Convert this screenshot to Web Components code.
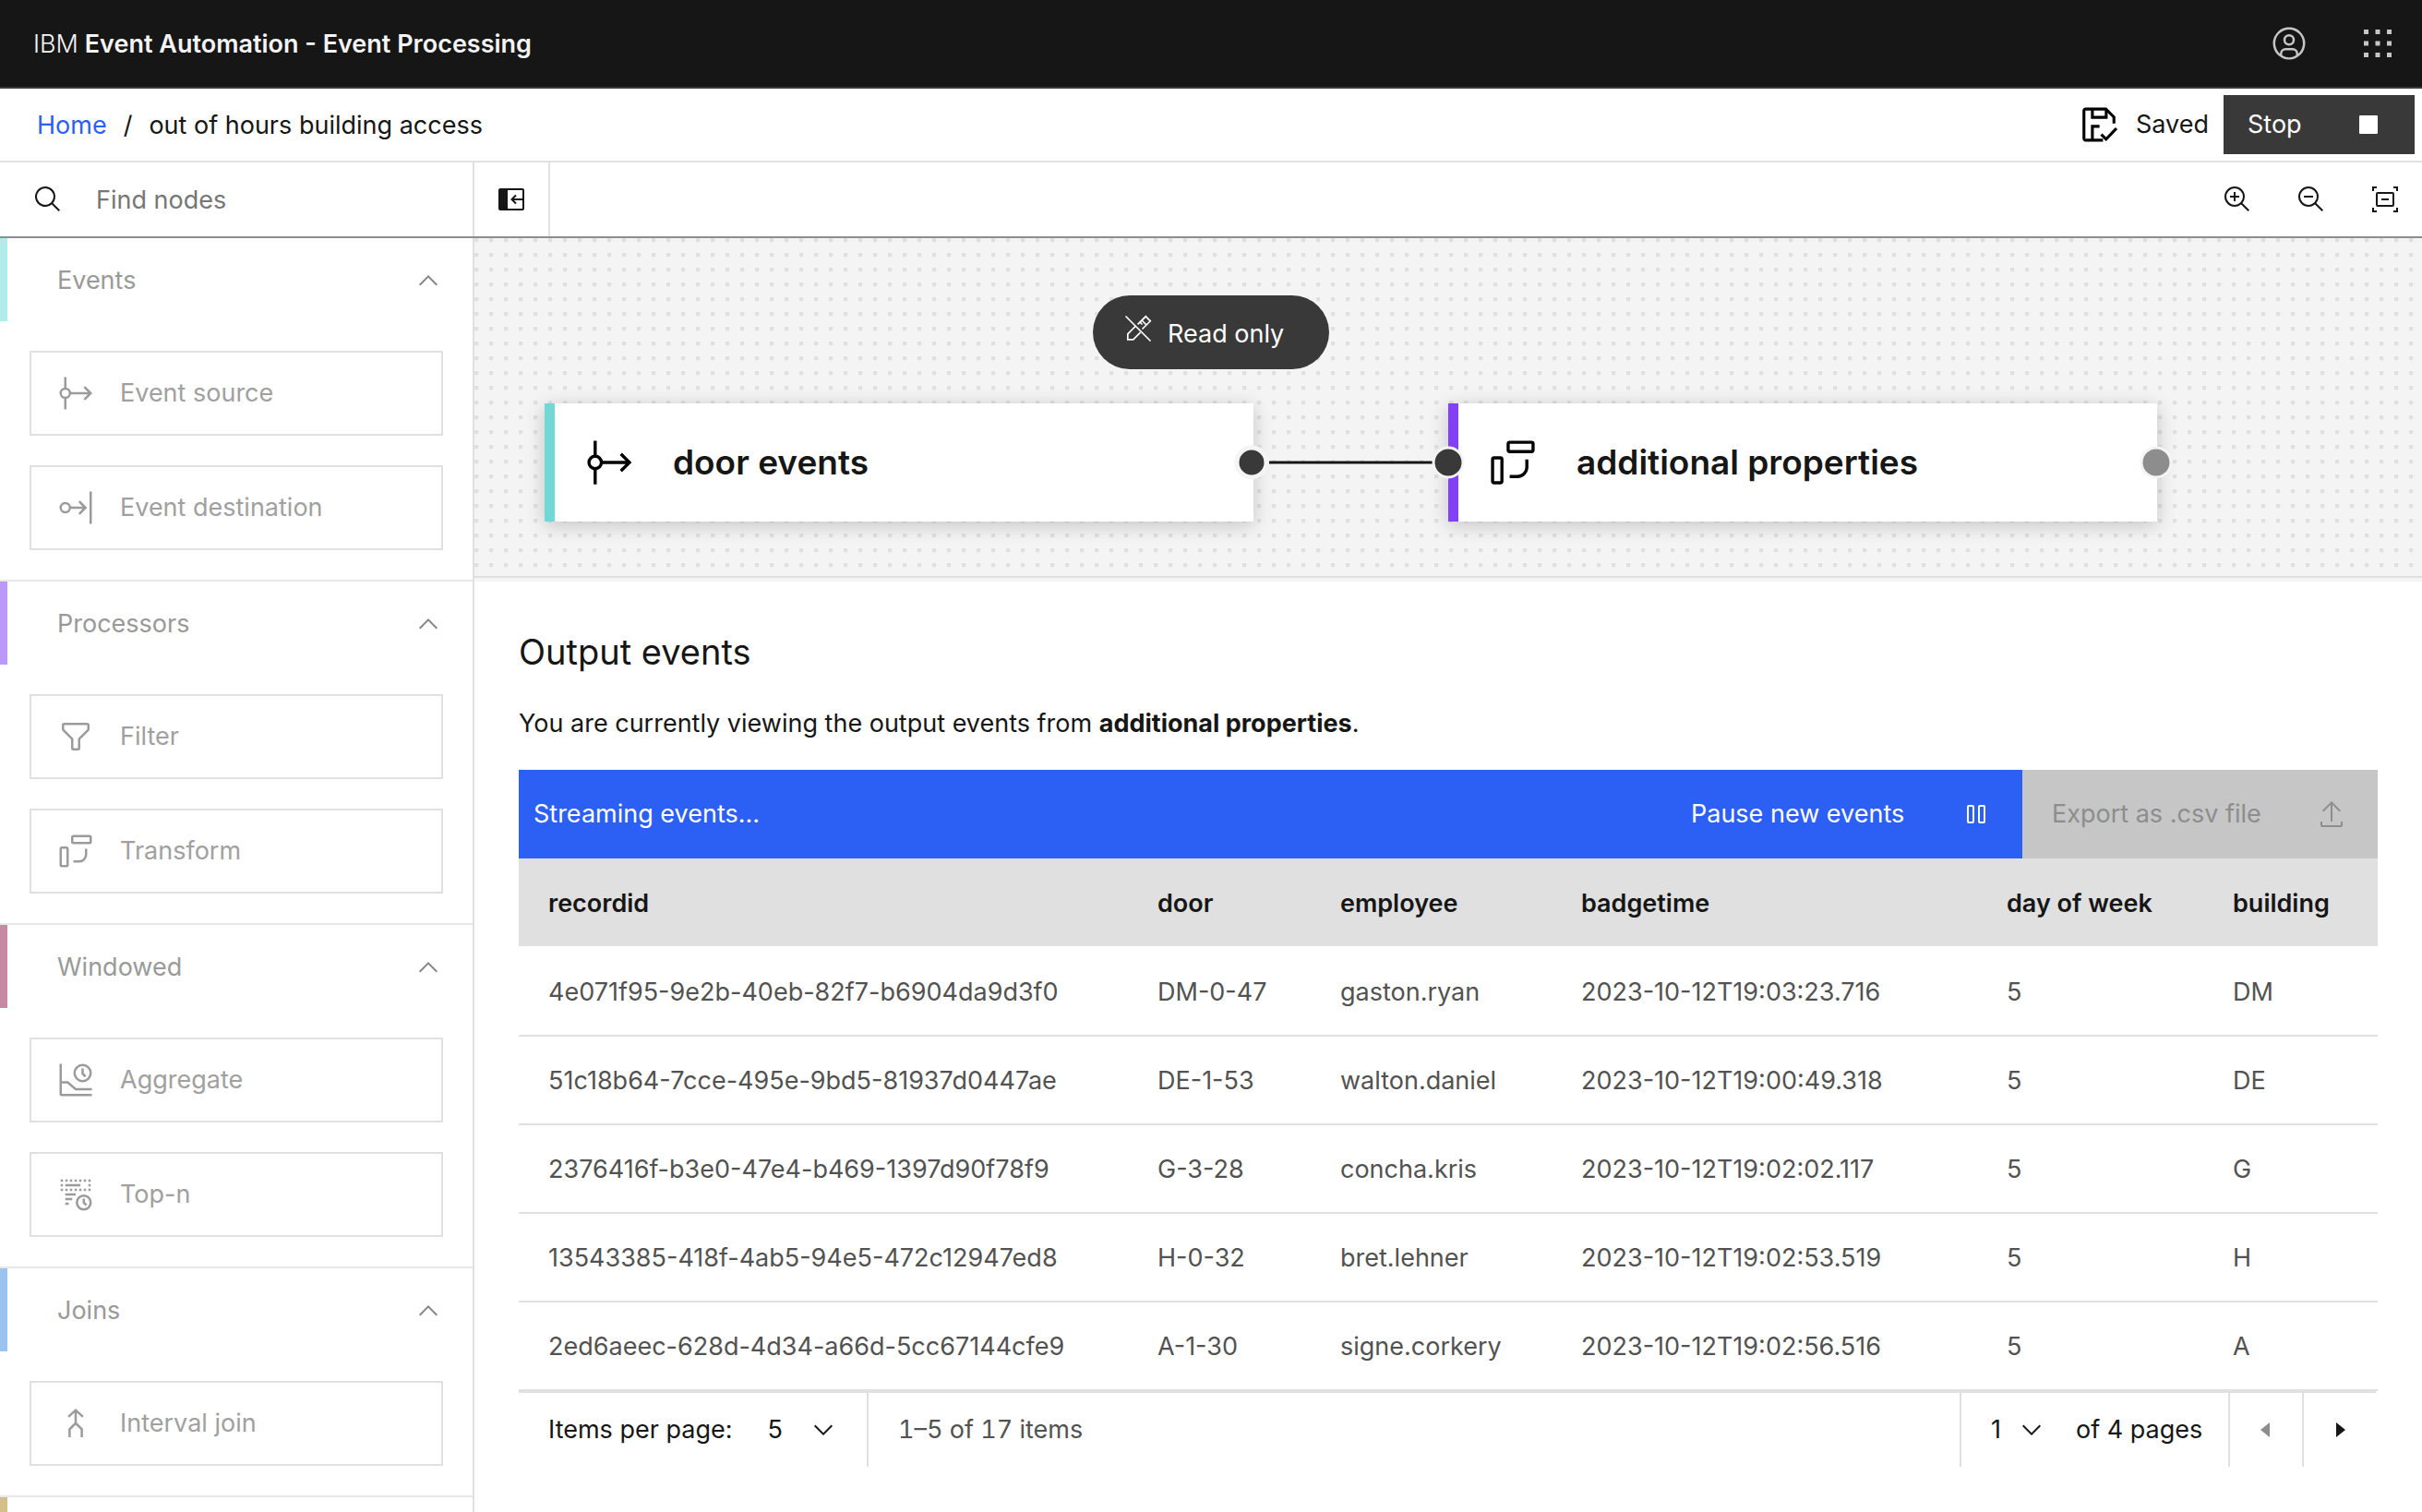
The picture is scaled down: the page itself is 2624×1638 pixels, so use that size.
<!DOCTYPE html>
<html lang="en">
<head>
<meta charset="utf-8">
<title>Event Processing</title>
<style>
html,body{margin:0;height:100%}
body{
  --ink:#161616;--muted:#525252;--line:#e0e0e0;--off:#9b9b9b;--blue:#2c60f5;--dark:#393939;
  font-family:Inter,"Open Sans",sans-serif;font-size:27px;line-height:36px;color:var(--ink);background:#fff;overflow:hidden}
</style>
</head>
<body>
<ep-app></ep-app>
<script>
const define=(name,css,html,init)=>{
  const tpl=document.createElement('template');
  tpl.innerHTML=`<style>*{box-sizing:border-box}
  button,input,select{font:inherit;color:inherit;background:none;border:0;margin:0;padding:0;border-radius:0;appearance:none;outline:0}
  ${css}</style>${html}`;
  customElements.define(name,class extends HTMLElement{
    constructor(){
      super();
      this.attachShadow({mode:'open'}).append(tpl.content.cloneNode(true));
    }
    connectedCallback(){
      if(init&&!this.ready){this.ready=true;init.call(this,this.shadowRoot);}
    }
  });
};

const S='fill="none" stroke="currentColor" stroke-width="2"';
const squares=pts=>pts.map(([x,y])=>`<rect x="${x-1}" y="${y-1}" width="2" height="2"/>`).join('');
const ICONS={
  search:'<path d="M29,27.586l-7.552-7.552a11.018,11.018,0,1,0-1.414,1.414L27.586,29ZM4,13a9,9,0,1,1,9,9A9.01,9.01,0,0,1,4,13Z"/>',
  zoomIn:'<path d="M18 12h-4V8h-2v4H8v2h4v4h2v-4h4z"/><path d="M21.448,20A10.856,10.856,0,0,0,24,13,11,11,0,1,0,13,24a10.856,10.856,0,0,0,7-2.552L27.586,29,29,27.586ZM13,22a9,9,0,1,1,9-9A9.01,9.01,0,0,1,13,22Z"/>',
  zoomOut:'<path d="M8 12h10v2H8z"/><path d="M21.448,20A10.856,10.856,0,0,0,24,13,11,11,0,1,0,13,24a10.856,10.856,0,0,0,7-2.552L27.586,29,29,27.586ZM13,22a9,9,0,1,1,9-9A9.01,9.01,0,0,1,13,22Z"/>',
  fit:`<g ${S}><path d="M3 7V3h4M25 3h4v4M29 25v4h-4M7 29H3v-4"/><rect x="7" y="9" width="18" height="14" rx="1"/><path d="M12 16h8"/></g>`,
  panel:`<rect x="3" y="5" width="26" height="22" rx="1" ${S}/><path d="M3 5h9v22H3z"/><path d="M29 16H17M21 11.500l-4.500 4.500 4.500 4.500" ${S}/>`,
  user:'<path d="M16,8a5,5,0,1,0,5,5A5,5,0,0,0,16,8Zm0,8a3,3,0,1,1,3-3A3,3,0,0,1,16,16Z"/><path d="M16,2A14,14,0,1,0,30,16,14.016,14.016,0,0,0,16,2ZM10,26.377V25a3,3,0,0,1,3-3h6a3,3,0,0,1,3,3v1.377a11.899,11.899,0,0,1-12,0Zm13.993-1.451A5.002,5.002,0,0,0,19,20H13a5.002,5.002,0,0,0-4.993,4.926,12,12,0,1,1,15.985,0Z"/>',
  apps:[4,14,24].map(y=>[4,14,24].map(x=>`<rect x="${x}" y="${y}" width="4" height="4"/>`).join('')).join(''),
  saved:'<g fill="none" stroke="currentColor" stroke-width="2.500"><path d="M19.500 29.500H4.500a1.500 1.500 0 0 1-1.500-1.500V4a1.500 1.500 0 0 1 1.500-1.500H22l7 7V15"/><path d="M10.300 3v6.700h12V3M10.300 29V17.500h6.200"/><path d="M18 24.500l4.200 4.200 9-9.500"/></g>',
  stop:'<rect x="6" y="6" width="20" height="20" rx="1"/>',
  up:'<path d="M16 10 26 20 24.600 21.400 16 12.800 7.400 21.400 6 20z"/>',
  down:'<path d="M16 22 6 12 7.400 10.600 16 19.200 24.600 10.600 26 12z"/>',
  left:'<path d="M20 24 10 16 20 8z"/>',
  right:'<path d="M12 8 22 16 12 24z"/>',
  source:`<g ${S}><circle cx="7" cy="16" r="4"/><path d="M7 2v10M7 20v10M11 16h18M23.500 10.500 29 16l-5.500 5.500"/></g>`,
  destination:`<g ${S}><circle cx="7" cy="16" r="4"/><path d="M11 16h13M19 10.500l5.500 5.500-5.500 5.500M29 2v28"/></g>`,
  filter:'<path d="M18,28H14a2,2,0,0,1-2-2V18.410L4.590,11A2,2,0,0,1,4,9.590V6A2,2,0,0,1,6,4H26a2,2,0,0,1,2,2V9.590A2,2,0,0,1,27.410,11L20,18.410V26A2,2,0,0,1,18,28ZM6,6V9.590l8,8V26h4V17.590l8-8V6Z"/>',
  transform:`<g ${S}><rect x="13" y="3" width="16" height="6" rx="1"/><rect x="3" y="13" width="6" height="16" rx="1"/><path d="M25 14v5a6 6 0 0 1-6 6h-5"/></g>`,
  aggregate:`<g ${S}><path d="M3 2v26a1 1 0 0 0 1 1h26M3 18h6l7 6h14"/><circle cx="22" cy="10" r="7"/><path d="M22 6v4.500l2.500 2.500"/></g>`,
  topn:squares([4,8,12,16,20,24,28].flatMap(x=>[[x,4],[x,12]]).concat([[4,8],[28,8]]))+
    `<path d="M7 8h13M7 16h9M7 20h6M7 24h3" ${S}/><g ${S}><circle cx="23" cy="23" r="6"/><path d="M23 19.500v3.500l2.300 2.300"/></g>`,
  join:`<g ${S}><path d="M9.700 10.300 16 4.500l6.300 5.800M16 5v11M10.700 28v-7L16 15.800 21.300 21v7"/></g>`,
  editOff:'<g fill="none" stroke="currentColor" stroke-width="1.700"><path d="M2.500 2.500l27 27M13 13.500 4.800 21.800v6h6l7.700-7.700M15.600 11.300 24.300 2.800l5 5-8.800 8.700M20 7l5 5M16 11l2-2 2.500 2.500"/></g>',
  pause:`<g ${S}><rect x="7" y="7" width="6" height="18" rx="1"/><rect x="19" y="7" width="6" height="18" rx="1"/></g>`,
  upload:'<path d="M6 12 7.411 13.405 15 5.825V24h2V5.825l7.591 7.580L26 12 16 2z"/><path d="M26,24v4H6V24H4v4a2,2,0,0,0,2,2H26a2,2,0,0,0,2-2V24Z"/>'
};
define('ep-icon',':host{display:block;flex:none;width:var(--size,32px);height:var(--size,32px)}svg{display:block;width:100%;height:100%;fill:currentColor;overflow:visible}','',function(r){
  r.innerHTML+=`<svg viewBox="0 0 32 32" aria-hidden="true">${ICONS[this.getAttribute('name')]}</svg>`;
});

define('ep-header',`:host{display:flex;align-items:center;height:96px;background:#161616;border-bottom:2px solid #393939;color:#f4f4f4;padding-left:36px}
h1{flex:1;margin:0;padding-top:2px;font-size:inherit;font-weight:600}span{font-weight:300}
button{width:96px;height:94px;display:grid;place-items:center;color:#c6c6c6;--size:40px}`,
`<h1><span>IBM</span> Event Automation - Event Processing</h1>
<button aria-label="User"><ep-icon name="user"></ep-icon></button>
<button aria-label="Applications"><ep-icon name="apps"></ep-icon></button>`);

define('ep-breadcrumb',`:host{display:flex;align-items:center;height:80px;border-bottom:2px solid var(--line);padding:0 8px 0 40px}
nav{flex:1;display:flex;gap:18px;padding-top:2px}a{color:var(--blue);text-decoration:none}
.saved{display:flex;align-items:center;gap:20px;margin-right:16px}.saved ep-icon{--size:40px;color:#000}
.stop{width:207px;height:64px;padding:0 34px 0 26px;display:flex;align-items:center;justify-content:space-between;background:var(--dark);color:#fff}`,
`<nav aria-label="Breadcrumb"><a href="#">Home</a><span>/</span><span>out of hours building access</span></nav>
<div class="saved"><ep-icon name="saved"></ep-icon><span>Saved</span></div>
<button class="stop">Stop<ep-icon name="stop"></ep-icon></button>`);

define('ep-toolbar',`:host{display:flex;height:82px;border-bottom:2px solid #8d8d8d}
label{width:514px;display:flex;align-items:center;gap:36px;padding-left:36px;border-right:2px solid var(--line)}
input{flex:1;min-width:0;padding-top:2px}input::placeholder{color:#767676;opacity:1}
button{width:80px;display:grid;place-items:center}
.panel{width:82px;border-right:2px solid var(--line);margin-right:auto}`,
`<label><ep-icon name="search"></ep-icon><input type="search" placeholder="Find nodes" aria-label="Find nodes"></label>
<button class="panel" aria-label="Collapse panel"><ep-icon name="panel"></ep-icon></button>
<button aria-label="Zoom in"><ep-icon name="zoomIn"></ep-icon></button>
<button aria-label="Zoom out"><ep-icon name="zoomOut"></ep-icon></button>
<button aria-label="Zoom to fit"><ep-icon name="fit"></ep-icon></button>`);

define('ep-section',`:host{display:flex;flex-direction:column;gap:32px;padding-bottom:32px;border-bottom:2px solid #e8e8e8;flex:none}
button{height:90px;display:flex;align-items:center;justify-content:space-between;border-left:8px solid var(--bar);padding:2px 32px 0 54px;color:#999}
ep-icon{color:#858585}
.items{display:flex;flex-direction:column;gap:32px;padding:0 32px}`,
`<button disabled><slot name="title"></slot><ep-icon name="up"></ep-icon></button><div class="items"><slot></slot></div>`);

define('ep-item',`:host{display:block}
button{width:100%;height:92px;display:flex;align-items:center;gap:28px;padding-left:28px;border:2px solid var(--line);color:#a0a0a0}
ep-icon{--size:40px;color:var(--off)}`,
`<button disabled><slot></slot></button>`,function(r){
  const i=document.createElement('ep-icon');i.setAttribute('name',this.getAttribute('icon'));r.querySelector('button').prepend(i);
});

define('ep-palette',`:host{display:flex;flex-direction:column;width:514px;flex:none;border-right:2px solid var(--line);overflow:hidden}`,
`<ep-section style="--bar:#b2ecea"><span slot="title">Events</span><ep-item icon="source">Event source</ep-item><ep-item icon="destination">Event destination</ep-item></ep-section>
<ep-section style="--bar:#bb99f8"><span slot="title">Processors</span><ep-item icon="filter">Filter</ep-item><ep-item icon="transform">Transform</ep-item></ep-section>
<ep-section style="--bar:#c68ba4"><span slot="title">Windowed</span><ep-item icon="aggregate">Aggregate</ep-item><ep-item icon="topn">Top-n</ep-item></ep-section>
<ep-section style="--bar:#9ac3f0"><span slot="title">Joins</span><ep-item icon="join">Interval join</ep-item></ep-section>
<ep-section style="--bar:#d4be8a"></ep-section>`);

define('ep-node',`:host{position:absolute;display:flex;align-items:center;width:768px;height:128px;background:#fff;border-left:11px solid var(--bar);
  box-sizing:border-box;box-shadow:0 4px 20px rgba(0,0,0,.2);padding-left:32px;gap:42px;font-size:37px;font-weight:600}
ep-icon{--size:54px;color:#000}`,`<slot></slot>`,function(r){
  const i=document.createElement('ep-icon');i.setAttribute('name',this.getAttribute('icon'));r.querySelector('slot').before(i);
});

define('ep-canvas',`:host{display:block;position:relative;height:372px;flex:none;background:#f4f4f4;overflow:hidden}
.dots{height:368px;border-bottom:2px solid var(--line);background:radial-gradient(circle at 2px 2px,#e0e0e0 2px,transparent 3px) 0 0/16px 16px}
svg{position:absolute;inset:0;width:100%;height:100%}
.a{left:76px;top:179px}.b{left:1055px;top:179px}`,
`<div class="dots"></div>
<ep-node class="a" icon="source" style="--bar:#71d8d6">door events</ep-node>
<ep-node class="b" icon="transform" style="--bar:#8341f5">additional properties</ep-node>
<svg aria-hidden="true"><path d="M861 243h178" stroke="#161616" stroke-width="3"/>
<g stroke="#f4f4f4"><circle cx="842" cy="243" r="16" fill="#393939" stroke-width="5"/>
<circle cx="1055" cy="243" r="16" fill="#393939" stroke-width="3"/><circle cx="1822" cy="243" r="16" fill="#8d8d8d" stroke-width="3"/></g></svg>`);

define('ep-toast',`:host{position:absolute;left:50%;top:320px;transform:translateX(-50%);width:256px;height:80px;border-radius:40px;background:var(--dark);color:#fff;
 box-sizing:border-box;display:flex;align-items:center;gap:16px;padding:4px 0 0 33px}ep-icon{padding-bottom:12px;box-sizing:content-box}`,
`<ep-icon name="editOff"></ep-icon><slot></slot>`);

define('ep-table',`:host{display:block}
table{width:100%;table-layout:fixed;border-collapse:separate;border-spacing:0}
th,td{text-align:left;padding:2px 0 0 32px;height:96px;border-bottom:2px solid var(--line);white-space:nowrap}
th{font-weight:600;height:97px;background:var(--line) padding-box;border-color:#fff}
td{color:var(--muted)}`,
`<table><colgroup><col style="width:660px"><col style="width:198px"><col style="width:261px"><col style="width:461px"><col style="width:245px"><col style="width:189px"></colgroup>
<thead><tr></tr></thead><tbody></tbody></table>`,function(r){
  const cols=['recordid','door','employee','badgetime','day of week','building'];
  const rows=[
    ['4e071f95-9e2b-40eb-82f7-b6904da9d3f0','DM-0-47','gaston.ryan','2023-10-12T19:03:23.716','5','DM'],
    ['51c18b64-7cce-495e-9bd5-81937d0447ae','DE-1-53','walton.daniel','2023-10-12T19:00:49.318','5','DE'],
    ['2376416f-b3e0-47e4-b469-1397d90f78f9','G-3-28','concha.kris','2023-10-12T19:02:02.117','5','G'],
    ['13543385-418f-4ab5-94e5-472c12947ed8','H-0-32','bret.lehner','2023-10-12T19:02:53.519','5','H'],
    ['2ed6aeec-628d-4d34-a66d-5cc67144cfe9','A-1-30','signe.corkery','2023-10-12T19:02:56.516','5','A']];
  r.querySelector('thead tr').innerHTML=cols.map(c=>`<th scope="col">${c}</th>`).join('');
  r.querySelector('tbody').innerHTML=rows.map(w=>`<tr>${w.map(c=>`<td>${c}</td>`).join('')}</tr>`).join('');
});

define('ep-pagination',`:host{display:flex;height:82px;border-top:2px solid var(--line);margin-right:2px;box-sizing:border-box;white-space:nowrap}
div,button{display:flex;align-items:center}
.size{padding-left:32px;gap:38px;width:379px;border-right:2px solid var(--line)}
.range{flex:1;padding-left:32px;color:var(--muted);font-variant-numeric:tabular-nums}
.pick{display:grid;align-items:center}.pick>*{grid-area:1/1}.pick ep-icon{justify-self:end;pointer-events:none}
.size select{width:76px}.page select{width:60px}
.page{width:291px;border-left:2px solid var(--line);padding-left:32px;gap:32px}
button{width:80px;justify-content:center;border-left:2px solid var(--line)}button:disabled{color:#8d8d8d}`,
`<div class="size"><label for="size">Items per page:</label><span class="pick"><select id="size"><option>5</option></select><ep-icon name="down"></ep-icon></span></div>
<div class="range">1–5 of 17 items</div>
<div class="page"><span class="pick"><select id="page" aria-label="Page"><option>1</option></select><ep-icon name="down"></ep-icon></span><label for="page">of 4 pages</label></div>
<button disabled aria-label="Previous page"><ep-icon name="left"></ep-icon></button>
<button aria-label="Next page"><ep-icon name="right"></ep-icon></button>`);

define('ep-output',`:host{display:block;padding:48px 48px 0}
h2{margin:0;font-size:38px;line-height:56px;font-weight:400}p{margin:32px 0}b{font-weight:700}
.bar{display:flex;align-items:center;height:96px;background:var(--blue);color:#fff}
.bar span{flex:1;padding-left:16px}
.bar button{height:96px;display:flex;align-items:center;justify-content:space-between;padding:0 34px 0 32px}
.pause{width:391px}.export{width:385px}.export:disabled{background:#c6c6c6;color:#8d8d8d}`,
`<h2>Output events</h2>
<p>You are currently viewing the output events from <b>additional properties</b>.</p>
<div class="bar"><span>Streaming events...</span>
<button class="pause">Pause new events<ep-icon name="pause"></ep-icon></button>
<button class="export" disabled>Export as .csv file<ep-icon name="upload"></ep-icon></button></div>
<ep-table></ep-table><ep-pagination></ep-pagination>`);

define('ep-app',`:host{display:flex;flex-direction:column;height:100vh;overflow:hidden;position:relative}
ep-header,ep-breadcrumb,ep-toolbar{flex:none;box-sizing:border-box}
.body{display:flex;flex:1;min-height:0}ep-palette{box-sizing:border-box}main{flex:1;min-width:0;overflow:hidden}`,
`<ep-header></ep-header><ep-breadcrumb></ep-breadcrumb><ep-toolbar></ep-toolbar>
<div class="body"><ep-palette></ep-palette><main><ep-canvas></ep-canvas><ep-output></ep-output></main></div>
<ep-toast>Read only</ep-toast>`);
</script>
</body>
</html>
